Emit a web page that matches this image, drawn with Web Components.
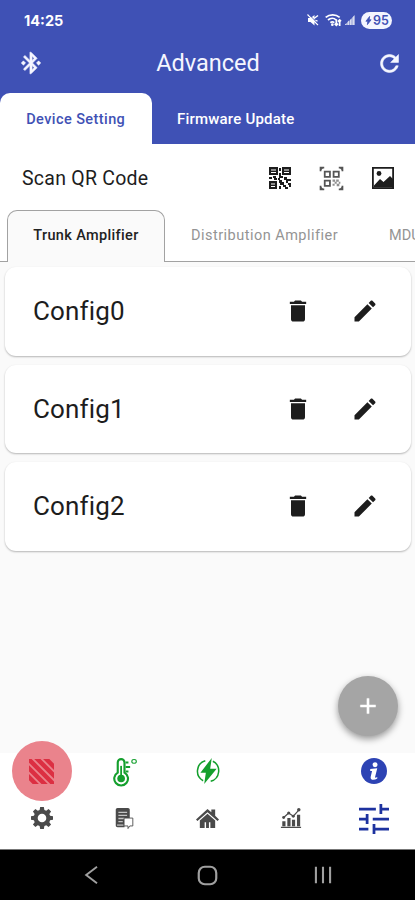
<!DOCTYPE html>
<html lang="en">
<head>
<meta charset="utf-8">
<meta name="viewport" content="width=device-width, initial-scale=1">
<title>Advanced</title>
<style>
    body {
        margin: 0;
        font-family: Roboto, "Liberation Sans", sans-serif;
        color: #1d1d1d;
    }
</style>
</head>
<body>
<advanced-page></advanced-page>

<script>
    const ICONS = {
        bluetooth: '<path stroke="currentColor" stroke-width=".5" d="M7 12l-2-2-2 2 2 2 2-2zm10.71-4.29L12 2h-1v7.59L6.41 5 5 6.41 10.59 12 5 17.59 6.41 19 11 14.41V22h1l5.71-5.71-4.3-4.29 4.3-4.29zM13 5.83l1.88 1.88L13 9.59V5.83zm1.88 10.46L13 18.17v-3.76l1.88 1.88zM19 10l-2 2 2 2 2-2-2-2z"/>',
        refresh: '<path stroke="currentColor" stroke-width=".5" d="M17.65 6.35C16.2 4.9 14.21 4 12 4c-4.42 0-7.99 3.58-7.99 8s3.57 8 7.99 8c3.73 0 6.84-2.55 7.73-6h-2.08c-.82 2.33-3.04 4-5.65 4-3.31 0-6-2.69-6-6s2.69-6 6-6c1.66 0 3.14.69 4.22 1.78L13 11h7V4l-2.35 2.35z"/>',
        trash: '<path d="M6 19c0 1.1.9 2 2 2h8c1.1 0 2-.9 2-2V7H6v12zM19 4h-3.5l-1-1h-5l-1 1H5v2h14V4z"/>',
        edit: '<path d="M3 17.25V21h3.75L17.81 9.94l-3.75-3.75L3 17.25zM20.71 7.04c.39-.39.39-1.02 0-1.41l-2.34-2.34c-.39-.39-1.02-.39-1.41 0l-1.83 1.83 3.75 3.75 1.83-1.83z"/>',
        muted: '<path d="M2 8v8h5l8 7V2L7 8z"/><path d="M14 9l8-6M15 13l6 1" fill="none" stroke="currentColor" stroke-width="3"/><path d="M1 1l21 21" fill="none" stroke="currentColor" stroke-width="2.6"/><path d="M4 1l20 20" fill="none" stroke="#3f51b5" stroke-width="1.600"/>',
        wifi: '<g fill="none" stroke="currentColor" stroke-width="2.6"><path d="M1 8c6-5 15-5 21 0M4.500 12c4-3.500 9-3.500 12 0M8 16c2-1.500 4-1.500 6 0"/><path d="M17 11v9m-2.500-2.500L17 20l2.500-2.500M22 21v-9m-2.500 2.500L22 12l2 2"/></g><circle cx="11" cy="19" r="2"/>',
        signal: '<path d="M2 22h3v-4l-3 3zM7 22h3v-9l-3 3zM12 22h3V9l-3 3zM17 22h4V2l-4 5z"/><path d="M2 22L21 3v19z" opacity=".55"/>',
        bolt: '<path d="M15 1L5 14h5l-1 9L19 10h-5z" stroke="currentColor" stroke-width="2"/>',
        qr: '<path fill-rule="evenodd" d="M1 1h9v8H1zM3 3.500v1h5v-1zM3 6v1h5V6zM14 1h9v8h-9zM16 3.500v1h5v-1zM16 6v1h5V6zM1 15h8v8H1zM3 17.500v1h4v-1zM3 20v1h4v-1zM11 2h2v3h-2zM11 7h2v3h2v2h-3v2H9v-2h2zM1 11h3v2H1zM5 10h3v2h2v2H6v-2H5zM16 11h3v2h4v2h-3v2h-2v-3h-2zM11 14h3v2h2v3h2v2h-3v-2h-3v-2h-1zM11 20h2v3h-2zM20 17h3v4h-2v-2h-1zM17 21h3v2h-3z"/>',
        scan: '<g fill="none" stroke="currentColor" stroke-width="1.700"><path d="M1.500 5V1.500H5M19 1.500h3.500V5M1.500 19v3.500H5M19 22.500h3.500V19"/><path d="M5.500 5.500h5v5h-5zM14 5.500h5v5h-5zM5.500 14h5v5h-5z"/></g><path d="M1 1h4L1 5zM23 1v4l-4-4zM1 23v-4l4 4zM23 23h-4l4-4z"/><path d="M13 13h2.500v2H13zM16.500 13H19v2h-2.500zM15 15h2v2h-2zM13 17h2v2h-2zM17 17h2.500v2.500H17zM19 15h1.500v2H19z" opacity=".65"/>',
        image: '<path fill-rule="evenodd" d="M1 1h22v22H1zM2.800 2.800v18.400h18.400V2.800z"/><circle cx="8" cy="7.500" r="2.400"/><path d="M3 21.500v-2l6-6.500 3.500 3L19 10l3 3v8.500z"/>',
        plus: '<path d="M19 13h-6v6h-2v-6H5v-2h6V5h2v6h6z" stroke="currentColor" stroke-width=".4"/>',
        stripes: '<path d="M0 14.500L9.500 24h-6L0 20.500zM0 6l18 18h-6L0 12zM0 0h2.500L24 21.500V24h-3.500L0 3.500zM5 0h6l13 13v6zM13.500 0h6L24 4.500v6z"/>',
        thermometer: '<g fill="none" stroke="currentColor" stroke-width="1.900"><path d="M6 13V4a3 3 0 0 1 6 0v9a6.100 6.100 0 1 1-6 0z"/><path d="M13 4h2.500M13 8h4M13 12h2.500"/><ellipse cx="20.500" cy="3" rx="2" ry="1.700" stroke-width="1"/></g><circle cx="9" cy="18.200" r="3.400"/><path d="M8.200 7h1.600v9H8.200z"/>',
        power: '<g fill="none" stroke="currentColor" stroke-width="1.300"><path d="M9.500 2.600A10 10 0 0 0 7.500 21M16.500 3A10 10 0 0 1 14.500 21.500" stroke-width="1.400"/></g><path d="M15.500 0L5 13.500h5L8.500 24 20 10h-6z"/>',
        info: '<circle cx="12" cy="12" r="12"/><g fill="#fff"><circle cx="13" cy="6.200" r="2.300"/><path d="M8.500 10.200l6.500-.7-2 8c-.2 1 .8.700 2 0v1.400c-3 2-7 1.500-6-1.900l1.200-5.100H8.500z"/></g>',
        gear: '<path d="M10 0h4l.6 3.200 2 .8 2.600-1.800 2.700 2.700L20 7.600l.8 2L24 10v4l-3.200.5-.8 2 1.900 2.600-2.700 2.700-2.600-1.900-2 .8L14 24h-4l-.6-3.300-2-.8-2.600 1.900-2.700-2.700L4 16.500l-.8-2L0 14v-4l3.200-.5.8-2-1.900-2.600 2.700-2.700L7.400 4l2-.8z"/><circle cx="12" cy="12" r="4.700" fill="#fff"/>',
        report: '<path d="M4 0h12c1 0 2 1 2 2v10h-6v10H4c-1 0-2-1-2-2V2c0-1 1-2 2-2z"/><path d="M5 5h10M5 8.500h10M5 12h7M5 15.500h5" stroke="#c4c4c4" stroke-width="1.500"/><path d="M3.500 19.500H11" stroke="#ddd" stroke-width="1.200"/><path d="M11.500 11.500h10v9h-3.500l-2 3v-3h-4.500z" fill="#fff" stroke="currentColor" stroke-width="1"/>',
        home: '<path d="M0 13L12 2l4 3.600V2.500h4v6.700l4 3.800-1.500 1.700L12 5.500 1.500 14.700z"/><path d="M4 14l8-7 8 7v8h-5v-6h-1.500v6h-3v-6H9v6H4z"/>',
        chart: '<path d="M1 21.500h22V23H1zM2.500 15.500H6V21H2.500zM8 12h3.500v9H8zM13 14h3.500v7H13zM18.500 8.500H22V21h-3.500z"/><path d="M4 11.500l5.500-5 5 3.500 6-6.500" fill="none" stroke="currentColor" stroke-width="1.300"/><circle cx="4" cy="11.500" r="1.600"/><circle cx="9.500" cy="6.500" r="1.700"/><circle cx="14.500" cy="10" r="1.600"/><circle cx="20.500" cy="3" r="1.900"/>',
        tune: '<g fill="none" stroke="currentColor" stroke-width="2.200"><path d="M0 4h13.500M17.500 0v8M17.500 4H24M0 12h6.500M6.500 8v8M11 12h13M0 20h7.500M12 16v8M12 20h12"/></g>',
        back: '<path d="M18 2L5 12l13 10" fill="none" stroke="currentColor" stroke-width="2.300"/>',
        square: '<rect x="2" y="2" width="20" height="20" rx="7" fill="none" stroke="currentColor" stroke-width="2.500"/>',
        recents: '<path d="M3.500 2v20M12 2v20M20.500 2v20" fill="none" stroke="currentColor" stroke-width="2.500"/>',
    };

    function render(element, html) {
        const template = document.createElement('template');
        template.innerHTML = html;
        element.attachShadow({ mode: 'open' });
        element.shadowRoot.appendChild(template.content.cloneNode(true));
    }

    class AppIcon extends HTMLElement {
        connectedCallback() {
            const size = this.getAttribute('size') || 24;
            render(this, `
                <style>
                    :host {
                        display: block;
                        flex: none;
                        line-height: 0;
                    }
                    svg {
                        display: block;
                        fill: currentColor;
                        overflow: visible;
                    }
                </style>
                <svg width="${size}" height="${size}" viewBox="0 0 24 24">${ICONS[this.getAttribute('name')]}</svg>
            `);
        }
    }

    class StatusBar extends HTMLElement {
        constructor() {
            super();
            render(this, `
                <style>
                    :host {
                        display: flex;
                        align-items: center;
                        height: 40px;
                        padding: 0 23px 0 24px;
                        box-sizing: border-box;
                        color: #fff;
                    }
                    .time {
                        flex: 1;
                        font: bold 14.5px Inter, sans-serif;
                        letter-spacing: 0;
                    }
                    .icons {
                        display: flex;
                        align-items: center;
                    }
                    .wifi {
                        margin-left: 6px;
                    }
                    .signal {
                        margin: 0 5px 0 3px;
                        opacity: 0.8;
                    }
                    .battery {
                        display: flex;
                        align-items: center;
                        justify-content: center;
                        width: 31px;
                        height: 17px;
                        border-radius: 9px;
                        background: #f4f5ff;
                        color: #3f51b5;
                        font: 600 12.5px Inter, sans-serif;
                    }
                </style>
                <span class="time">14:25</span>
                <div class="icons">
                    <app-icon name="muted" size="12"></app-icon>
                    <app-icon class="wifi" name="wifi" size="16"></app-icon>
                    <app-icon class="signal" name="signal" size="12"></app-icon>
                    <div class="battery"><app-icon name="bolt" size="9"></app-icon>95</div>
                </div>
            `);
        }
    }

    class AppHeader extends HTMLElement {
        constructor() {
            super();
            render(this, `
                <style>
                    :host {
                        display: flex;
                        align-items: center;
                        justify-content: space-between;
                        height: 53px;
                        padding: 0 12px 7px 18px;
                        box-sizing: border-box;
                        color: #f5f6ff;
                    }
                    h1 {
                        margin: 0 4px 0 0;
                        font-size: 23.5px;
                        font-weight: 400;
                    }
                </style>
                <app-icon name="bluetooth" size="26"></app-icon>
                <h1><slot></slot></h1>
                <app-icon name="refresh" size="27"></app-icon>
            `);
        }
    }

    class MainTabs extends HTMLElement {
        constructor() {
            super();
            render(this, `
                <style>
                    :host {
                        display: flex;
                        height: 51px;
                        line-height: 53px;
                        font-size: 15px;
                        font-weight: 500;
                        color: #fff;
                    }
                    .active {
                        width: 151.500px;
                        border-radius: 10px 10px 0 0;
                        background: #fff;
                        color: #3f51b5;
                        font-size: 14.5px;
                        text-align: center;
                        letter-spacing: 0.42px;
                    }
                    .other {
                        padding-left: 25.500px;
                        letter-spacing: 0.2px;
                    }
                </style>
                <div class="active">Device Setting</div>
                <div class="other">Firmware Update</div>
            `);
        }
    }

    class ScanRow extends HTMLElement {
        constructor() {
            super();
            render(this, `
                <style>
                    :host {
                        display: flex;
                        align-items: center;
                        height: 66px;
                        padding: 2px 20px 0 22px;
                        box-sizing: border-box;
                        background: #fff;
                    }
                    .label {
                        flex: 1;
                        font-size: 19.5px;
                        letter-spacing: 0.25px;
                    }
                    .actions {
                        display: flex;
                        gap: 27px;
                        align-items: center;
                    }
                    .scan {
                        color: #555;
                    }
                </style>
                <span class="label"><slot></slot></span>
                <div class="actions">
                    <app-icon name="qr" size="24"></app-icon>
                    <app-icon class="scan" name="scan" size="25"></app-icon>
                    <app-icon name="image" size="24"></app-icon>
                </div>
            `);
        }
    }

    class DeviceTabs extends HTMLElement {
        constructor() {
            super();
            render(this, `
                <style>
                    :host {
                        display: flex;
                        height: 52px;
                        overflow: hidden;
                        background: #fff;
                        font-size: 14.5px;
                        line-height: 52px;
                        white-space: nowrap;
                        color: #949494;
                    }
                    div {
                        box-sizing: border-box;
                        flex: none;
                        border-bottom: 1px solid #a2a2a2;
                    }
                    .edge {
                        width: 7px;
                    }
                    .active {
                        width: 158px;
                        border: 1px solid #a2a2a2;
                        border-bottom: 0;
                        border-radius: 10px 10px 0 0;
                        background: #fafafa;
                        color: #222;
                        font-weight: 500;
                        line-height: 50px;
                        text-align: center;
                        letter-spacing: 0.35px;
                    }
                    .tab {
                        width: 198px;
                        padding-left: 26px;
                        letter-spacing: 0.48px;
                    }
                    .last {
                        letter-spacing: 0;
                    }
                </style>
                <div class="edge"></div>
                <div class="active">Trunk Amplifier</div>
                <div class="tab">Distribution Amplifier</div>
                <div class="tab last">MDU</div>
            `);
        }
    }

    class ConfigCard extends HTMLElement {
        constructor() {
            super();
            render(this, `
                <style>
                    :host {
                        display: flex;
                        align-items: center;
                        height: 88.500px;
                        padding: 0 32.500px 0 28px;
                        box-sizing: border-box;
                        border-radius: 11px;
                        background: #fff;
                        box-shadow: 0 1px 2px rgba(0, 0, 0, 0.28);
                    }
                    .name {
                        flex: 1;
                        font-size: 26px;
                        letter-spacing: 0.15px;
                    }
                    .actions {
                        display: flex;
                        gap: 39px;
                    }
                </style>
                <span class="name"><slot></slot></span>
                <div class="actions">
                    <app-icon name="trash" size="28"></app-icon>
                    <app-icon name="edit" size="28"></app-icon>
                </div>
            `);
        }
    }

    class AddButton extends HTMLElement {
        constructor() {
            super();
            render(this, `
                <style>
                    :host {
                        display: flex;
                        align-items: center;
                        justify-content: center;
                        width: 60px;
                        height: 60px;
                        border-radius: 50%;
                        background: #a5a5a5;
                        color: #fff;
                        box-shadow: 0 3px 7px rgba(0, 0, 0, 0.4);
                    }
                </style>
                <app-icon name="plus" size="26"></app-icon>
            `);
        }
    }

    class BottomBar extends HTMLElement {
        constructor() {
            super();
            render(this, `
                <style>
                    :host {
                        display: grid;
                        grid-template-columns: repeat(5, 1fr);
                        grid-template-rows: 36px 58px;
                        height: 96px;
                        background: #fff;
                        color: #4a4a4a;
                        align-items: center;
                        justify-items: center;
                    }
                    .alarm {
                        display: flex;
                        align-items: center;
                        justify-content: center;
                        width: 60px;
                        height: 60px;
                        margin: -12px 0;
                        border-radius: 50%;
                        background: #ea838c;
                        color: #dc2f42;
                    }
                    .green {
                        color: #149f2d;
                    }
                    .blue {
                        color: #2d43b4;
                    }
                    .tune {
                        margin-top: 1px;
                        color: #1d329f;
                    }
                </style>
                <div class="alarm"><app-icon name="stripes" size="25"></app-icon></div>
                <app-icon class="green" name="thermometer" size="27"></app-icon>
                <app-icon class="green" name="power" size="26"></app-icon>
                <span></span>
                <app-icon class="blue" name="info" size="26"></app-icon>
                <app-icon name="gear" size="22"></app-icon>
                <app-icon name="report" size="21"></app-icon>
                <app-icon name="home" size="23"></app-icon>
                <app-icon name="chart" size="22"></app-icon>
                <app-icon class="tune" name="tune" size="30"></app-icon>
            `);
        }
    }

    class NavBar extends HTMLElement {
        constructor() {
            super();
            render(this, `
                <style>
                    :host {
                        display: flex;
                        align-items: center;
                        justify-content: space-between;
                        height: 51px;
                        padding: 0 82px;
                        box-sizing: border-box;
                        border-top: 1px solid #777;
                        background: #000;
                        color: #a0a0a0;
                    }
                </style>
                <app-icon name="back" size="20"></app-icon>
                <app-icon name="square" size="21"></app-icon>
                <app-icon name="recents" size="20"></app-icon>
            `);
        }
    }

    class AdvancedPage extends HTMLElement {
        constructor() {
            super();
            render(this, `
                <style>
                    :host {
                        display: flex;
                        flex-direction: column;
                        height: 900px;
                        overflow: hidden;
                        background: #fafafa;
                    }
                    .top {
                        background: #3f51b5;
                    }
                    main {
                        position: relative;
                        flex: 1;
                        display: flex;
                        flex-direction: column;
                        gap: 9px;
                        padding: 5px 4px 0 5px;
                    }
                    add-button {
                        position: absolute;
                        right: 17px;
                        bottom: 17px;
                    }
                </style>
                <div class="top">
                    <status-bar></status-bar>
                    <app-header>Advanced</app-header>
                    <main-tabs></main-tabs>
                </div>
                <scan-row>Scan QR Code</scan-row>
                <device-tabs></device-tabs>
                <main>
                    <config-card>Config0</config-card>
                    <config-card>Config1</config-card>
                    <config-card>Config2</config-card>
                    <add-button></add-button>
                </main>
                <bottom-bar></bottom-bar>
                <nav-bar></nav-bar>
            `);
        }
    }

    customElements.define('app-icon', AppIcon);
    customElements.define('status-bar', StatusBar);
    customElements.define('app-header', AppHeader);
    customElements.define('main-tabs', MainTabs);
    customElements.define('scan-row', ScanRow);
    customElements.define('device-tabs', DeviceTabs);
    customElements.define('config-card', ConfigCard);
    customElements.define('add-button', AddButton);
    customElements.define('bottom-bar', BottomBar);
    customElements.define('nav-bar', NavBar);
    customElements.define('advanced-page', AdvancedPage);
</script>
</body>
</html>
